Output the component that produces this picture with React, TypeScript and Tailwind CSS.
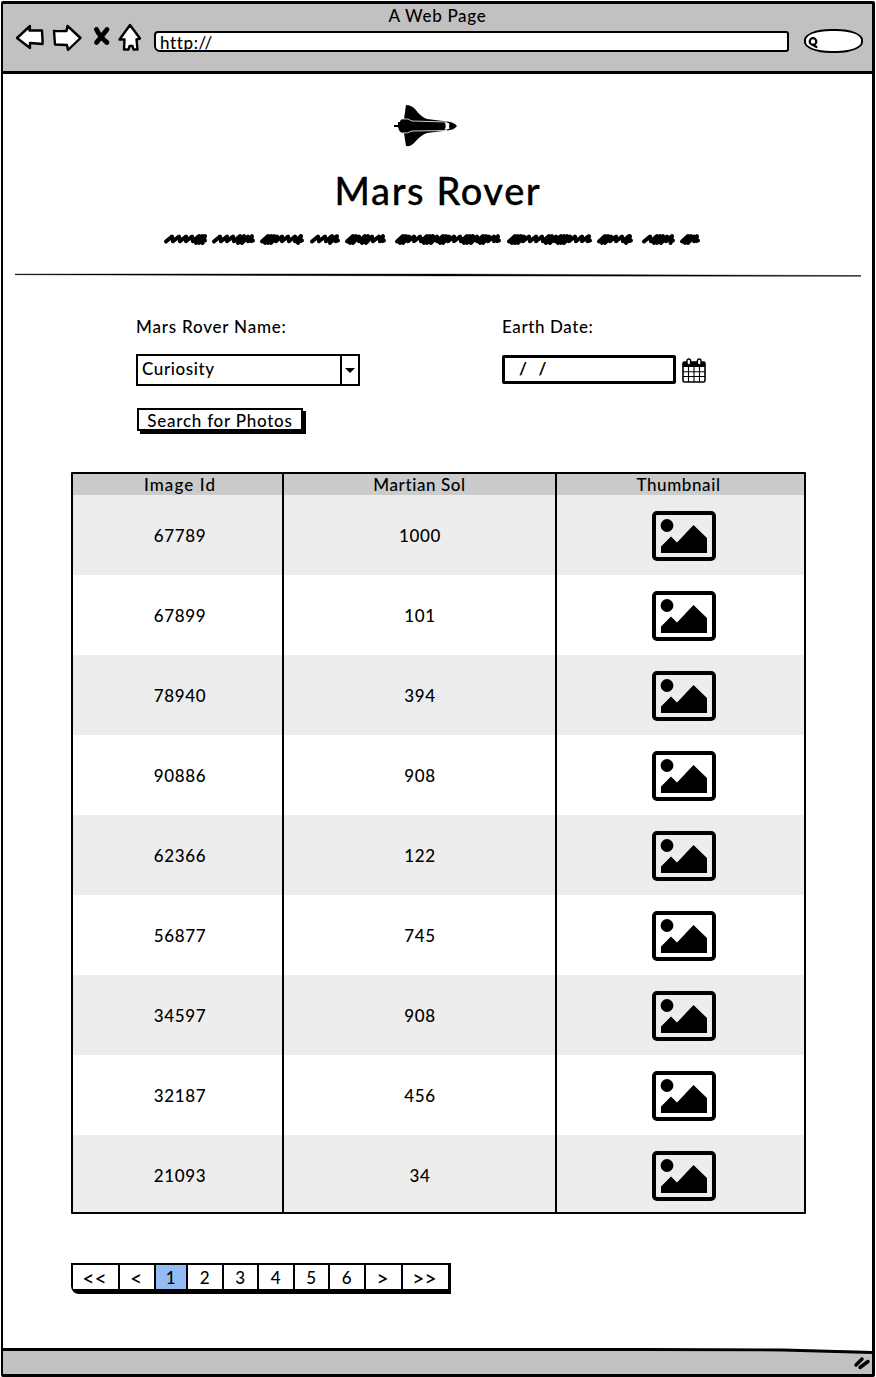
import React from 'react';

const rows = [
  ['67789', '1000'],
  ['67899', '101'],
  ['78940', '394'],
  ['90886', '908'],
  ['62366', '122'],
  ['56877', '745'],
  ['34597', '908'],
  ['32187', '456'],
  ['21093', '34'],
];

const words = [
  [164, 207], [212, 255], [260, 304], [310, 340], [345, 386],
  [395, 501], [507, 592], [597, 633], [642, 675], [680, 700],
];

// Stroke advances for each word: wide steps leave gaps, narrow ones fill in.
const advances = [
  [7, 7, 6, 7, 3, 3, 5], [7, 6, 7, 4, 4, 6], [3, 3, 3, 5, 6, 7, 6], [7, 7, 4, 6], [3, 3, 6, 3, 4, 7, 7],
  [3, 3, 5, 6, 7, 3, 3, 4, 6], [3, 3, 3, 5, 7, 6, 7, 3, 4, 5], [3, 3, 5, 6, 7], [7, 3, 3, 4, 5], [3, 3, 6],
];

function scribble(x0: number, x1: number, steps: number[]) {
  let x = x0 + 2;
  let d = `M${x} 8.5`;
  for (let i = 0; x < x1 - 7; i++) {
    const step = Math.min(steps[i % steps.length], x1 - 5 - x + 0.5);
    const dense = step < 5;
    d += `L${x + 6} ${dense ? 3 : 3.5}L${x + step} ${dense ? 10 : 8.3}`;
    x += step;
  }
  return d + `L${x1 - 3} 3.200L${x1 - 4} 8L${x1 - 2} 7.500`;
}

function Toolbar() {
  return (
    <svg className="block h-[32px] w-[130px] shrink-0" viewBox="0 0 130 32" fill="white" stroke="black" strokeWidth="2.4" strokeLinejoin="round" strokeLinecap="round">
      <path d="M2 16L15 4L14.500 8.500L27 8.500C27 13 28 18 27.500 22L15 21L15 26Z" />
      <path d="M39 9C42.500 9.500 47.500 8.800 51.500 9L52.500 4L65.500 16L53 28L52 23L40 22.500Q39.500 16 39 9Z" />
      <path d="M81.500 7.500Q85 15 92 20.500M92 7.500Q87 14 81.500 20.500" strokeWidth="4.800" />
      <path d="M115 3L125 16.500L121.500 17.500L122.500 27.500H118.500L117.500 24L114.500 24L113.500 27.500H109L109.500 17.500L104.500 17.500Z" />
    </svg>
  );
}

function Shuttle() {
  return (
    <svg className="block h-[42px] w-[64px]" viewBox="0 0 64 42">
      <path d="M12 0Q17 0 21 4Q27 12 33 14L53 16.500Q60 17 63 21Q60 25 53 25.500L33 28Q27 30 21 37Q17 42 12 41L10 28Q6 28 5 25L4 22H0V20H4V17H6Q6 14 10 14Z" />
      <path d="M9 14Q14 13 18 16L53 17M9 28Q14 28.500 18 26L53 25.500" fill="none" stroke="white" strokeWidth="0.800" />
      <path d="M50.500 17.500Q54 17 55.500 18.800Q54.500 21 55.500 23.500Q54 25 50.500 24.500Q53 21 50.500 17.500Z" fill="white" />
    </svg>
  );
}

function Thumb() {
  return (
    <svg className="ml-[6px] block h-[50px] w-[64px]" viewBox="0 0 64 50">
      <rect x="2" y="2" width="60" height="46" rx="3" fill="none" stroke="black" strokeWidth="4" />
      <circle cx="15" cy="14.500" r="6.400" />
      <path d="M9 42V35.500L19 25.500L25 31.500L41.500 14L55 27V42Z" />
    </svg>
  );
}

function Calendar() {
  return (
    <svg className="block h-[25px] w-[24px]" viewBox="0 0 24 25">
      <rect x="1" y="4" width="22" height="20" rx="1.500" fill="white" stroke="black" strokeWidth="1.600" />
      <path d="M1 4H23V9H1Z" />
      <path d="M1 13.800H23M1 18.500H23M6.500 9V24M12 9V24M17.500 9V24" stroke="black" strokeWidth="1.100" />
      <rect x="5" y="1" width="3.600" height="6" rx="1.800" fill="white" stroke="black" strokeWidth="1.400" />
      <rect x="15.400" y="1" width="3.600" height="6" rx="1.800" fill="white" stroke="black" strokeWidth="1.400" />
    </svg>
  );
}

function PageButton({ label, width, active }: { label: string; width: number; active?: boolean }) {
  const arrow = label.includes('<') || label.includes('>');
  return (
    <div
      className={`flex items-center justify-center border-r-2 border-black pt-px last:border-r-0 ${active ? 'bg-[#94bbf3]' : 'bg-white'} ${arrow ? 'pr-[2px] text-[21px] tracking-[0px]' : ''}`}
      style={{ width }}
    >
      {label}
    </div>
  );
}

export default function App() {
  return (
    <div className="flex h-[1377px] w-[876px] bg-white px-px pt-px font-['Lato',sans-serif] text-[17px] leading-[20px] font-medium tracking-[0.6px] text-black">
      <div className="flex w-[874px] flex-col rounded-[2px] border-[3px] border-l-2 border-black">
        <header className="h-[70px] shrink-0 border-b-[3px] border-black bg-[#c1c1c1]">
          <div className="flex h-[18px] justify-center pt-[2px]">
            <span className="tracking-[0.7px]">A Web Page</span>
          </div>
          <div className="flex items-start pl-[12px]">
            <Toolbar />
            <div className="mt-[9px] ml-[9px] h-[21px] w-[635px] overflow-hidden rounded-[4px_3px_3px_6px] border-[2.500px] border-black bg-white pl-[4px]">
              <span className="block">http:<span className="tracking-[2px]">//</span></span>
            </div>
            <div className="mt-[7px] ml-[15px] flex h-[24px] w-[59px] items-center rounded-[45%] border-[2.500px] border-black bg-white pl-[2px]">
              <svg className="mt-[3px] h-[12px] w-[12px]" viewBox="0 0 12 12" fill="none" stroke="black" strokeWidth="2.200" strokeLinecap="round">
                <circle cx="5" cy="4.500" r="3.300" />
                <path d="M5 8L8.500 10" />
              </svg>
            </div>
          </div>
        </header>

        <main className="flex grow flex-col pl-px">
          <div className="flex flex-col items-center pt-[31px]">
            <div className="pr-[24px]"><Shuttle /></div>
            <h1 className="mt-[18px] text-[38px] leading-[50px] font-medium tracking-[1.600px] [-webkit-text-stroke:0.300px_black]">Mars Rover</h1>
          </div>
          <svg className="mt-[18px] block h-[14px] w-[868px] shrink-0" viewBox="4 0 868 14" fill="none" stroke="black" strokeWidth="4" strokeLinecap="round" strokeLinejoin="round">
            {words.map(([a, b], i) => <path key={a} d={scribble(a, b, advances[i])} />)}
          </svg>
          <svg className="mt-[26px] ml-[11px] block h-[4px] w-[846px] shrink-0" viewBox="0 0 846 4">
            <path d="M0 1L180 1L430 1.100L846 2.600L846 3.300L430 2.900L180 2.300L0 1.700Z" stroke="black" strokeWidth="0.400" />
          </svg>

          <div className="mt-[40px] flex h-[119px] pl-[132px]">
            <div className="w-[366px]">
              <div className="tracking-[0.800px]">Mars Rover Name:</div>
              <div className="mt-[17px] flex h-[32px] w-[224px] border-2 border-black">
                <div className="grow pt-[3px] pl-[4px]">Curiosity</div>
                <div className="flex w-[18px] items-center justify-center border-l-2 border-black">
                  <svg className="h-[5px] w-[10px]" viewBox="0 0 10 5"><path d="M0 0H10L5 5Z" /></svg>
                </div>
              </div>
              <button className="mt-[22px] ml-px block h-[23px] w-[166px] border-2 border-black bg-white leading-[20px] font-medium tracking-[0.750px] whitespace-nowrap shadow-[3px_3px_0_0_#000]"><span className="block pt-px">Search for Photos</span></button>
            </div>
            <div>
              <div>Earth Date:</div>
              <div className="mt-[18px] flex items-start">
                <div className="h-[29px] w-[174px] rounded-[2px] border-[3px] border-black pt-px pl-[14px] font-bold">
                  <span>/</span><span className="pl-[11px]">/</span>
                </div>
                <div className="ml-[6px] pt-[3px]"><Calendar /></div>
              </div>
            </div>
          </div>

          <div className="mt-[36px] ml-[67px] h-[742px] w-[735px] shrink-0 overflow-hidden rounded-[1px] border-[2.500px] border-black">
            <div className="grid h-[21px] grid-cols-[211px_273px_1fr] bg-[#cbcbcb] text-center leading-[22px]">
              <div className="border-r-2 border-black pl-[5px] tracking-[1.100px]">Image Id</div>
              <div className="border-r-2 border-black">Martian Sol</div>
              <div className="pr-[4px]">Thumbnail</div>
            </div>
            {rows.map(([id, sol], i) => (
              <div key={id} className={`grid h-[80px] grid-cols-[211px_273px_1fr] ${i % 2 ? 'bg-white' : 'bg-[#ededed]'}`}>
                <div className="flex items-center justify-center border-r-2 border-black pt-[2px] pl-[5px]">{id}</div>
                <div className="flex items-center justify-center border-r-2 border-black pt-[2px] pl-px">{sol}</div>
                <div className="flex items-center justify-center pt-[2px]"><Thumb /></div>
              </div>
            ))}
          </div>

          <div className="mt-[49px] ml-[67px] flex h-[31px] w-[380px] rounded-bl-[8px] border-2 border-r-[3px] border-b-[5px] border-black">
            <PageButton label="<<" width={47} />
            <PageButton label="<" width={36} />
            <PageButton label="1" width={32} active />
            <PageButton label="2" width={36} />
            <PageButton label="3" width={35} />
            <PageButton label="4" width={36} />
            <PageButton label="5" width={35} />
            <PageButton label="6" width={36} />
            <PageButton label=">" width={37} />
            <PageButton label=">>" width={45} />
          </div>
        </main>

        <footer className="flex h-[26px] shrink-0 items-start justify-end bg-[#c1c1c1]">
          <svg className="block h-[26px] w-[869px]" viewBox="0 0 869 26">
            <path d="M0 0H869V3L780 1L640 0Z" fill="white" />
            <path d="M0 1.500L640 1.500L780 2L869 4.500" fill="none" stroke="black" strokeWidth="2.800" />
            <path d="M853 17L859 11M857 19.500L865 13.500" stroke="black" strokeWidth="3.500" strokeLinecap="round" />
          </svg>
        </footer>
      </div>
    </div>
  );
}
